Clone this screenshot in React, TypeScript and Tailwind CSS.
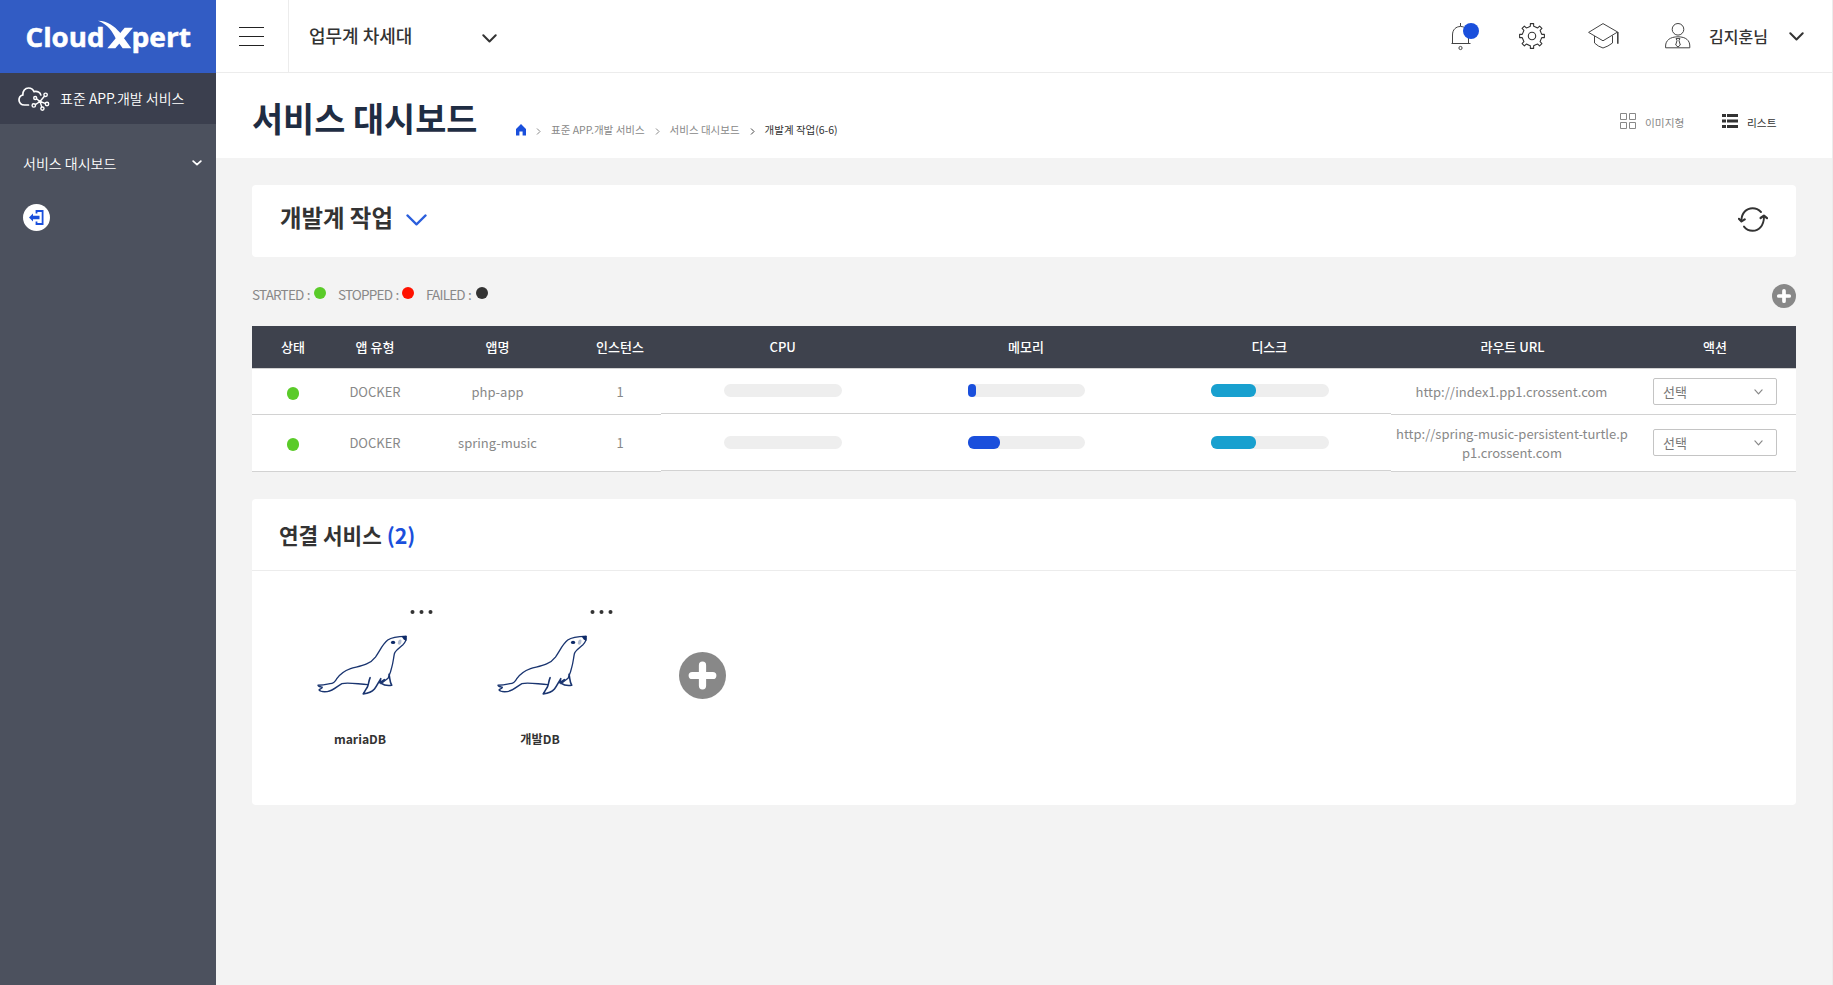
import type { ReactNode } from 'react';

function Chevron({ w, h, stroke, color }: { w: number; h: number; stroke: number; color: string }) {
  const p = stroke / 2 + 0.3;
  return (
    <svg width={w} height={h} viewBox={`0 0 ${w} ${h}`} fill="none" className="block shrink-0">
      <path d={`M${p} ${p} L${w / 2} ${h - p - 0.2} L${w - p} ${p}`} stroke={color} strokeWidth={stroke} strokeLinecap="round" strokeLinejoin="round" />
    </svg>
  );
}

function Logo() {
  return (
    <svg width="190" height="58" viewBox="10 15 190 58" className="block">
      <g fill="#fff" stroke="#fff" strokeWidth="0.5" strokeLinejoin="round" fontFamily='"Open Sans", "Noto Sans", sans-serif' fontWeight="700" fontSize="27.5">
        <text x="25.5" y="47" textLength="79" lengthAdjust="spacingAndGlyphs">Cloud</text>
        <text x="131.5" y="47" textLength="59.5" lengthAdjust="spacingAndGlyphs">pert</text>
      </g>
      <g transform="translate(10 15) scale(0.33333)" fill="#fff">
        <path d="M264 17 C294 18 314 34 329 52 L364 100 L338 100 L318 72 C308 50 294 28 264 17 Z" />
        <path d="M292 100 L344 38 L369 38 L316 100 Z" />
      </g>
    </svg>
  );
}

function CloudNodes() {
  return (
    <svg width="32" height="24" viewBox="0 0 32 24" fill="none" stroke="#fff" strokeWidth="1.7" strokeLinecap="round" className="block shrink-0">
      <path d="M10.5 18 H6.5 C3.2 18 1 15.8 1 13 C1 10.4 2.6 8.6 4.8 8 C4.6 4 7 1 10.6 1 C13.2 1 15 2.4 16 4.6 C19.2 3.8 22.4 5.2 22.8 8" />
      <path d="M22 14.5 L18.2 11.6 M22 14.5 L26.6 9 M22 14.5 L17 17.8 M22 14.5 L27.8 16.6 M22 14.5 L24 20.6" strokeWidth="1.4" />
      <circle cx="22" cy="14.5" r="1.5" fill="#fff" stroke="none" />
      <g fill="#3b3f4e" strokeWidth="1.4">
        <circle cx="17.2" cy="11" r="1.5" /><circle cx="27.6" cy="7.8" r="1.7" /><circle cx="15.8" cy="18.4" r="1.7" />
        <circle cx="29" cy="17" r="1.7" /><circle cx="24.4" cy="21.6" r="1.6" />
      </g>
    </svg>
  );
}

function Bell() {
  return (
    <svg width="30" height="29" viewBox="0 0 30 29" fill="none" stroke="#444" strokeWidth="1" className="block">
      <path d="M10.5 0 V3 M1.5 20.5 H20.5 M2.5 20 V12 C2.5 6.5 6 3.5 10.5 3.5 C15 3.5 18.5 6.5 18.5 12 V20" />
      <circle cx="10.5" cy="25" r="1.6" />
      <circle cx="21" cy="8" r="8" fill="#1a4fdc" stroke="none" />
    </svg>
  );
}

function Gear() {
  const pts: string[] = [];
  for (let i = 0; i < 8; i++) {
    const a = (i * Math.PI) / 4;
    const at = (r: number, d: number) => `${(13 + r * Math.sin(a + d)).toFixed(2)} ${(13 - r * Math.cos(a + d)).toFixed(2)}`;
    pts.push(at(9.9, -0.17), at(12.5, -0.13), at(12.5, 0.13), at(9.9, 0.17), at(9.6, 0.39));
  }
  return (
    <svg width="26" height="26" viewBox="0 0 26 26" fill="none" stroke="#333" strokeWidth="1.1" strokeLinejoin="round" className="block">
      <path d={`M${pts.join(' L')} Z`} />
      <circle cx="13" cy="13" r="3.7" />
    </svg>
  );
}

function Cap() {
  return (
    <svg width="31" height="26" viewBox="0 0 31 26" fill="none" stroke="#444" strokeWidth="1" strokeLinejoin="round" className="block">
      <path d="M15 0.6 L29.6 9 L15 17.8 L0.6 9.4 Z M6.5 13 V20 Q10 23.5 15 25 Q20 23.5 24.5 20 V12.5" />
      <path d="M29.8 9 V20.8" strokeWidth="1.6" />
    </svg>
  );
}

function Person() {
  return (
    <svg width="26" height="26" viewBox="0 0 26 26" fill="none" stroke="#444" strokeWidth="1" strokeLinejoin="round" className="block">
      <circle cx="13" cy="6.3" r="5.8" />
      <path d="M0.6 24.8 V23 C0.6 17.5 5 13.8 13 13.8 C21 13.8 24.8 17.5 24.8 23 V24.8 Z" />
      <path d="M11 15.6 H15 L14 17.6 L15.3 22 L13 24 L10.7 22 L12 17.6 Z" />
    </svg>
  );
}

function Refresh() {
  return (
    <svg width="30" height="25" viewBox="0 0 30 25" fill="none" stroke="#333" strokeWidth="1.9" strokeLinecap="round" strokeLinejoin="round" className="block">
      <path d="M23 5 C20.6 2.4 17.8 1.2 14.6 1.2 C8.4 1.2 3.6 6 3.4 13.4" />
      <path d="M0.9 11.8 L3.5 14.4 L6.7 12.4" strokeWidth="2.2" />
      <path d="M6 19.6 C8.4 22.6 11.2 23.8 14.6 23.8 C21 23.8 25.8 18.6 26 10" />
      <path d="M22.6 11 L25.9 8.6 L29 11.2" strokeWidth="2.2" />
    </svg>
  );
}

function Seal() {
  return (
    <svg width="93" height="64" viewBox="21 100 280 192" fill="none" stroke="#1a3570" strokeWidth="4" strokeLinecap="round" strokeLinejoin="round" className="block">
      <path d="M289 110 C270 110 246 112 234 121 C218 134 211 152 197 172 C178 197 148 199 122 207 C100 215 88 226 80 238 C76 246 70 252 60 252 C50 254 42 256 24 257 C25 261 32 262 37 263 C38 267 28 268 27 271 C31 277 42 277 52 276 C72 273 82 259 96 252 C116 247 146 254 174 255" />
      <path d="M289 110 C291 120 287 128 279 136 C270 144 257 152 254 162 C251 178 250 190 246 203 C243 217 239 226 235 236 L213 252" />
      <path d="M181 234 C176 246 177 254 172 264 C167 271 164 277 160 283 C176 281 186 277 194 268 C201 260 205 250 213 237 L210 249 L224 240 L215 251 C221 256 232 259 246 257 C240 248 241 240 238 224" strokeWidth="4.8" />
      <path d="M275 109 L290 108 L290 124 L282 119 Z" fill="#0d2a68" stroke="none" />
      <ellipse cx="250" cy="128" rx="6.5" ry="5" fill="#0d2a68" stroke="none" />
      <ellipse cx="270" cy="127" rx="5" ry="8" fill="#b4bfd3" stroke="none" transform="rotate(20 270 127)" />
    </svg>
  );
}

function PlusCircle({ size }: { size: number }) {
  return (
    <svg width={size} height={size} viewBox="0 0 48 48" className="block">
      <circle cx="24" cy="24" r="24" fill="#888" />
      <path d="M24 13.5 V34.5 M13.5 24 H34.5" stroke="#fff" strokeWidth="7.4" strokeLinecap="round" />
    </svg>
  );
}

function Header() {
  return (
    <header className="flex h-[73px] border-b border-[#ececec] bg-white">
      <div className="h-[72px] w-[73px] border-r border-[#ececec] pl-[23px] pt-[27px]">
        <svg width="25" height="19" viewBox="0 0 25 19" className="block">
          <path d="M0 0.5 H25 M0 9.5 H25 M0 18.5 H25" stroke="#222" strokeWidth="1" />
        </svg>
      </div>
      <div className="flex h-[72px] w-[208px] items-start justify-between pl-5">
        <span className="pt-[22px] text-[18px] font-medium leading-[26px] text-[#333]">업무계 차세대</span>
        <div className="pt-[34px]"><Chevron w={15} h={9} stroke={2} color="#333" /></div>
      </div>
      <div className="ml-auto flex h-[72px] items-start pr-[28px] pt-[23px]">
        <div className="mr-[39px]"><Bell /></div>
        <div className="mr-[43px]"><Gear /></div>
        <div className="mr-[46px]"><Cap /></div>
        <div className="mr-[18px]"><Person /></div>
        <span className="w-[60px] whitespace-nowrap text-[16px] font-medium leading-[27px] text-[#333]">김지훈님</span>
        <div className="ml-[20px] pt-[9px]"><Chevron w={15} h={9} stroke={2} color="#333" /></div>
      </div>
    </header>
  );
}

function Crumb({ children, last }: { children: ReactNode; last?: boolean }) {
  return (
    <>
      <svg width="5" height="7" viewBox="0 0 5 7" fill="none" className="mx-[10px] mt-[2px] block">
        <path d="M1 0.5 L4 3.5 L1 6.5" stroke={last ? '#444' : '#888'} strokeWidth="1" />
      </svg>
      <span className={last ? 'text-[#333]' : 'text-[#888]'}>{children}</span>
    </>
  );
}

function TitleBar() {
  return (
    <div className="flex h-[85px] items-start bg-white pl-[36px] pr-[55px]">
      <h1 className="w-[264px] whitespace-nowrap pt-[20px] text-[33.8px] font-bold leading-[50px] text-[#1f2d43]">서비스 대시보드</h1>
      <div className="flex items-center whitespace-nowrap pt-[49px] text-[10.5px] leading-[16px]">
        <svg width="10" height="12" viewBox="0 0 10 12" className="-mt-px block">
          <path d="M5 0 L10 5 V11.5 H6.6 V7.5 H3.4 V11.5 H0 V5 Z" fill="#1a4fdc" />
        </svg>
        <Crumb>표준 APP.개발 서비스</Crumb>
        <Crumb>서비스 대시보드</Crumb>
        <Crumb last>개발계 작업(6-6)</Crumb>
      </div>
      <div className="ml-auto flex items-start whitespace-nowrap pt-[40px] text-[10.7px] leading-[16px]">
        <svg width="16" height="16" viewBox="0 0 16 16" fill="none" stroke="#888" className="mr-[9px] block">
          <path d="M0.5 0.5 H6.5 V6.5 H0.5 Z M9.5 0.5 H15.5 V6.5 H9.5 Z M0.5 9.5 H6.5 V15.5 H0.5 Z M9.5 9.5 H15.5 V15.5 H9.5 Z" />
        </svg>
        <span className="mr-[36px] w-[41px] pt-[2px] text-[#888]">이미지형</span>
        <svg width="16" height="16" viewBox="0 0 16 16" className="mr-[9px] block">
          <path d="M0 1 H4 V4 H0 Z M5 1 H16 V4 H5 Z M0 6.5 H4 V9.5 H0 Z M5 6.5 H16 V9.5 H5 Z M0 12 H4 V15 H0 Z M5 12 H16 V15 H5 Z" fill="#333" />
        </svg>
        <span className="w-[30px] pt-[2px] text-[#333]">리스트</span>
      </div>
    </div>
  );
}

function Sidebar() {
  return (
    <aside className="flex w-[216px] shrink-0 flex-col bg-[#4c515e] font-[350] text-white">
      <div className="h-[73px] bg-[#325cc4] pl-[10px] pt-[15px]"><Logo /></div>
      <div className="flex h-[51px] items-center bg-[#3b3f4e] pl-[18px]">
        <CloudNodes />
        <span className="mb-[2px] ml-[10px] whitespace-nowrap text-[14px] leading-[20px]">표준 APP.개발 서비스</span>
      </div>
      <div className="mt-[28px] flex h-[22px] items-center justify-between pl-[23px] pr-[14px]">
        <span className="text-[14px] leading-[20px]">서비스 대시보드</span>
        <Chevron w={10} h={6} stroke={1.8} color="#fff" />
      </div>
      <div className="ml-[23px] mt-[30px] flex size-[27px] items-center justify-center rounded-full bg-white">
        <svg width="15" height="15" viewBox="0 0 15 15" fill="none" className="block">
          <path d="M7.5 3.5 V1 H13.6 V14 H7.5 V11.4" stroke="#1a4fdc" strokeWidth="1.8" />
          <path d="M0 7.5 L4 3.4 V5.8 H10.5 V9.2 H4 V11.6 Z" fill="#1a4fdc" />
        </svg>
      </div>
    </aside>
  );
}

const legend = [
  { label: 'STARTED :', dot: 'bg-[#5acb29]', width: 'w-[62px]', box: 'w-[86px]' },
  { label: 'STOPPED :', dot: 'bg-[#ff1200]', width: 'w-[64px]', box: 'w-[88px]' },
  { label: 'FAILED :', dot: 'bg-[#333333]', width: 'w-[50px]', box: 'w-[75px]' },
];

const rows = [
  { name: 'php-app', url: 'http://index1.pp1.crossent.com', mem: 8, disk: 45, h: 'h-[46px]', inner: 'h-[45px]' },
  { name: 'spring-music', url: 'http://spring-music-persistent-turtle.pp1.crossent.com', mem: 32, disk: 45, h: 'h-[57px]', inner: 'h-[57px]' },
];

const GRID = 'grid grid-cols-[82px_82px_163px_82px_243.33px_243.33px_243.34px_243px_162px]';

function Bar({ value, color, last, height }: { value: number; color: string; last: boolean; height: string }) {
  return (
    <div className={`${height} flex justify-center border-b border-[#d2d2d2] bg-white pl-px ${last ? '-mt-px pt-[22px]' : 'pt-[15px]'}`}>
      <div className="h-[13px] w-[117.4px] rounded-full bg-[#eeeeee]">
        <div className={`h-[13px] rounded-[6px] ${color}`} style={{ width: value }} />
      </div>
    </div>
  );
}

function AppTable() {
  const base = 'flex items-center justify-center border-b border-[#d2d2d2] bg-white';
  return (
    <div className="mt-[18px] text-[13px] leading-[19px] text-[#888]">
      <div className={`${GRID} h-[42px] items-center bg-[#3e424d] text-center font-medium text-white`}>
        {['상태', '앱 유형', '앱명', '인스턴스', 'CPU', '메모리', '디스크', '라우트 URL', '액션'].map((t) => (
          <div key={t} className="leading-[20px]">{t}</div>
        ))}
      </div>
      <div className="border-t border-[#d2d2d2]">
        {rows.map((r, i) => {
          const cell = `${base} ${i ? 'pb-[1px]' : ''}`;
          return (
            <div key={r.name} className={`${GRID} ${r.h}`}>
              <div className={`${base} ${i ? 'pt-[2px]' : 'pt-[4px]'}`}><span className="h-[13px] w-[12px] rounded-full bg-[#5acb29]" /></div>
              <div className={cell}>DOCKER</div>
              <div className={cell}>{r.name}</div>
              <div className={cell}>1</div>
              <Bar value={0} color="" last={i === 1} height={r.inner} />
              <Bar value={r.mem} color="bg-[#1a4fdc]" last={i === 1} height={r.inner} />
              <Bar value={r.disk} color="bg-[#18a0cf]" last={i === 1} height={r.inner} />
              <div className={`${base} ${i ? 'pr-[1px]' : 'pr-[2px]'} text-center`}>
                <span className="w-[234px] break-all leading-[19px]">{r.url}</span>
              </div>
              <div className={`flex items-start justify-center border-b border-[#d2d2d2] bg-white ${i ? 'pt-[14px]' : 'pt-[9px]'}`}>
                <div className="flex h-[27px] w-[124px] items-center justify-between rounded-[2px] border border-[#c4c4c4] pl-[9px] pr-[13px]">
                  <span className="text-[13px] leading-[18px] text-[#777]">선택</span>
                  <Chevron w={9} h={6} stroke={1.2} color="#888" />
                </div>
              </div>
            </div>
          );
        })}
      </div>
    </div>
  );
}

function Services() {
  return (
    <section className="mt-[27px] h-[306px] rounded-[4px] bg-white">
      <div className="h-[72px] border-b border-[#ececec] pl-[27px] pt-[19px]">
        <h2 className="text-[21.3px] font-bold leading-[34px] text-[#333]">
          연결 서비스 <span className="text-[#1a4fdc]">(2)</span>
        </h2>
      </div>
      <div className="flex pl-[18px]">
        {['mariaDB', '개발DB'].map((name) => (
          <div key={name} className="flex w-[180px] flex-col pt-[39px]">
            <svg width="24" height="5" viewBox="0 0 24 5" fill="#333" className="ml-[140px] block">
              <circle cx="2.5" cy="2" r="2" /><circle cx="11.5" cy="2" r="2" /><circle cx="20.5" cy="2" r="2" />
            </svg>
            <div className="ml-[47px] mt-[18px]"><Seal /></div>
            <div className="mt-[33px] text-center text-[12.2px] font-bold leading-[19px] text-[#333]">{name}</div>
          </div>
        ))}
        <div className="ml-[49px] mt-[81px]"><PlusCircle size={47} /></div>
      </div>
    </section>
  );
}

export default function App() {
  return (
    <div className="flex h-[985px] w-[1833px] overflow-hidden bg-[#f3f3f3] font-['Noto_Sans_CJK_KR',sans-serif]">
      <Sidebar />
      <div className="flex w-[1617px] flex-col border-r border-[#ececec]">
        <Header />
        <TitleBar />
        <main className="w-[1580px] pl-[36px] pt-[27px]">
          <div className="flex h-[72px] items-start rounded-[4px] bg-white pl-[28px] pr-[28px]">
            <h2 className="w-[126px] whitespace-nowrap pt-[14px] text-[23.4px] font-bold leading-[36px] text-[#333]">개발계 작업</h2>
            <div className="pt-[29px]"><Chevron w={21} h={12} stroke={2.2} color="#2b5fdc" /></div>
            <div className="ml-auto pt-[22px]"><Refresh /></div>
          </div>
          <div className="mt-[27px] flex h-[24px] items-start">
            {legend.map((l) => (
              <div key={l.label} className={`flex items-start ${l.box}`}>
                <span className={`${l.width} whitespace-nowrap text-[13.5px] leading-[20px] tracking-[-0.8px] text-[#888] [word-spacing:1px]`}>{l.label}</span>
                <span className={`mt-[3px] h-[12px] w-[12px] rounded-full ${l.dot}`} />
              </div>
            ))}
            <div className="ml-auto"><PlusCircle size={24} /></div>
          </div>
          <AppTable />
          <Services />
        </main>
      </div>
    </div>
  );
}
